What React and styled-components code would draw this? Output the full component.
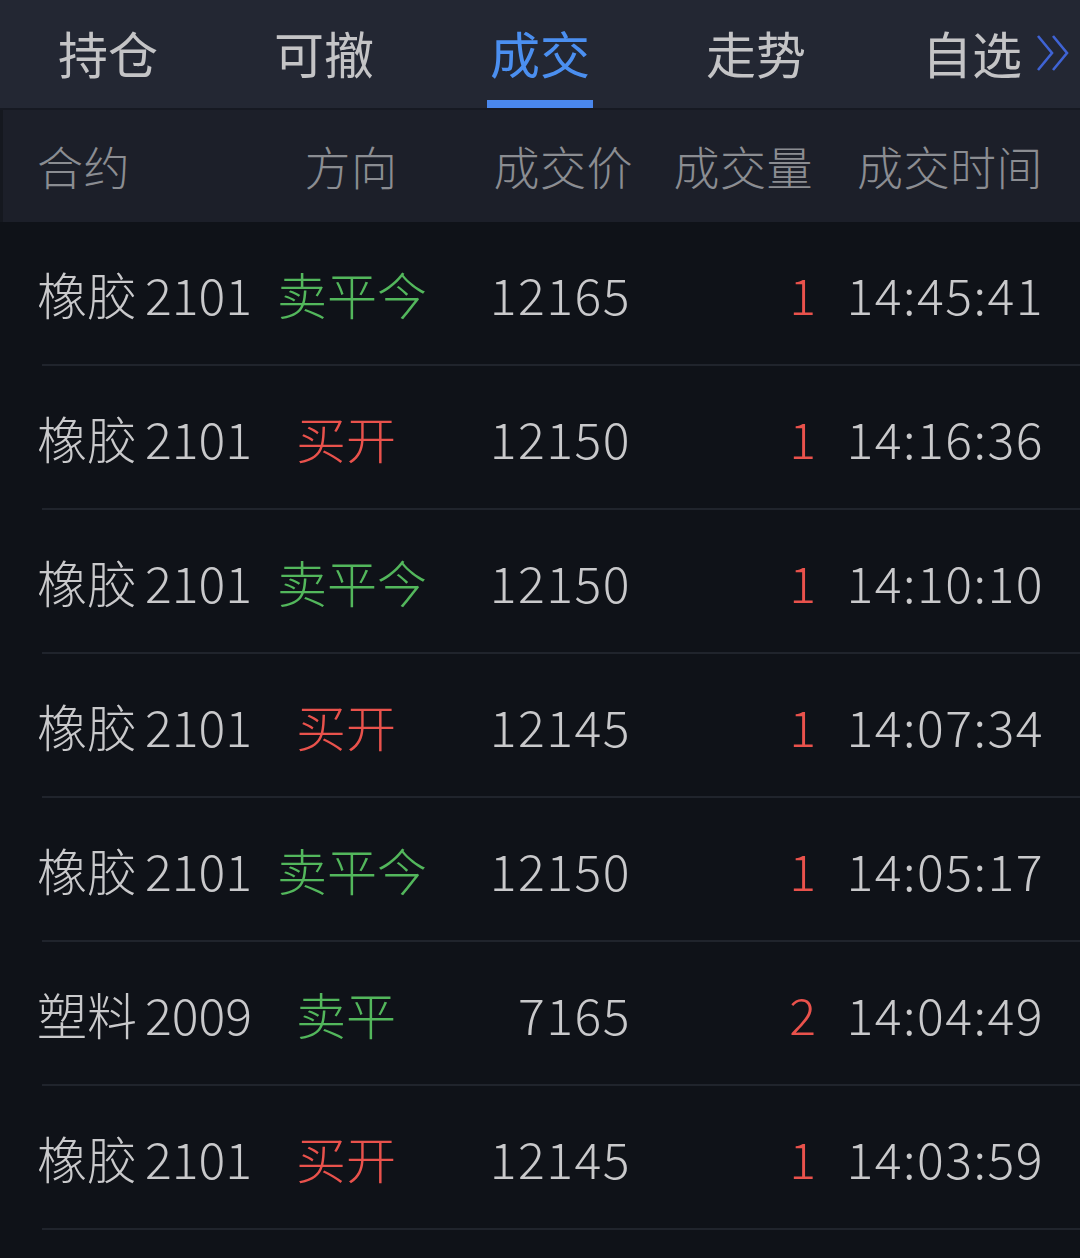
import React from "react";
import styled, { createGlobalStyle } from "styled-components";

const GlobalStyle = createGlobalStyle`
  html, body {
    margin: 0;
    padding: 0;
    background: #0f1218;
    overflow: hidden;
  }
  body {
    font-family: "Noto Sans CJK SC", "Noto Sans", sans-serif;
    font-weight: 300;
    -webkit-font-smoothing: antialiased;
  }
`;

const tabs = ["持仓", "可撤", "成交", "走势", "自选"];

const trades = [
  { name: "橡胶", code: "2101", dir: "卖平今", side: "sell", price: "12165", vol: "1", time: "14:45:41" },
  { name: "橡胶", code: "2101", dir: "买开", side: "buy", price: "12150", vol: "1", time: "14:16:36" },
  { name: "橡胶", code: "2101", dir: "卖平今", side: "sell", price: "12150", vol: "1", time: "14:10:10" },
  { name: "橡胶", code: "2101", dir: "买开", side: "buy", price: "12145", vol: "1", time: "14:07:34" },
  { name: "橡胶", code: "2101", dir: "卖平今", side: "sell", price: "12150", vol: "1", time: "14:05:17" },
  { name: "塑料", code: "2009", dir: "卖平", side: "sell", price: "7165", vol: "2", time: "14:04:49" },
  { name: "橡胶", code: "2101", dir: "买开", side: "buy", price: "12145", vol: "1", time: "14:03:59" },
];

function Chevrons() {
  return (
    <svg width="34" height="38" viewBox="0 0 34 38" fill="none">
      <path d="M2 2 L16 19 L2 36" stroke="#3f63d4" strokeWidth="2.6" />
      <path d="M17 2 L31 19 L17 36" stroke="#3f63d4" strokeWidth="2.6" />
    </svg>
  );
}

function App() {
  return (
    <Page>
      <GlobalStyle />
      <TabBar>
        {tabs.map((t, i) => (
          <Tab key={t} $active={i === 2}>
            <TabLabel $more={i === 4}>
              {t}
              {i === 4 && (
                <More>
                  <Chevrons />
                </More>
              )}
            </TabLabel>
          </Tab>
        ))}
      </TabBar>
      <HeadRow>
        <HeadCell $align="left">合约</HeadCell>
        <HeadCell $align="center">方向</HeadCell>
        <HeadCell $align="right">成交价</HeadCell>
        <HeadCell $align="right" $inset={6}>成交量</HeadCell>
        <HeadCell $align="right">成交时间</HeadCell>
      </HeadRow>
      <List>
        {trades.map((r, i) => (
          <Row key={i}>
            <Contract>
              {r.name}
              <Code>{r.code}</Code>
            </Contract>
            <Direction $side={r.side}>{r.dir}</Direction>
            <Num>{r.price}</Num>
            <Vol>{r.vol}</Vol>
            <Num>{r.time}</Num>
          </Row>
        ))}
      </List>
    </Page>
  );
}

export default App;

const Page = styled.div`
  width: 1080px;
  height: 1258px;
  background: #0f1218;
  overflow: hidden;
`;

const TabBar = styled.div`
  display: grid;
  grid-template-columns: repeat(5, 1fr);
  height: 110px;
  background: #232733;
  border-bottom: 2px solid #161922;
  box-sizing: border-box;
`;

const Tab = styled.div`
  display: flex;
  align-items: center;
  justify-content: center;
  height: 100%;
  font-size: 50px;
  font-weight: 400;
  color: ${(p) => (p.$active ? "#4b8ff0" : "#c4c4c6")};
  background-image: ${(p) =>
    p.$active ? "linear-gradient(#4a87ec, #4a87ec)" : "none"};
  background-repeat: no-repeat;
  background-size: 106px 9px;
  background-position: center 100px;
  padding-bottom: 4px;
  box-sizing: border-box;
`;

const TabLabel = styled.span`
  display: inline-flex;
  align-items: center;
  line-height: 1;
  margin-right: ${(p) => (p.$more ? "-48px" : "0")};
`;

const More = styled.span`
  display: inline-flex;
  margin-left: 14px;
  margin-top: 2px;
`;

const cols = "240px 142px 211px 186px 1fr";

const HeadRow = styled.div`
  display: grid;
  grid-template-columns: ${cols};
  align-items: center;
  height: 112px;
  padding: 0 37px;
  background: #1c1f29;
  border-left: 3px solid #15181f;
  box-sizing: border-box;
  font-size: 46px;
  color: #8b8d92;
`;

const HeadCell = styled.div`
  text-align: ${(p) => p.$align};
  line-height: 1;
  white-space: nowrap;
  padding-bottom: 2px;
  letter-spacing: 0.5px;
  margin-left: ${(p) => (p.$align === "left" ? "-3px" : "0")};
  margin-right: ${(p) => (p.$inset ? `${p.$inset}px` : "0")};
`;

const List = styled.div`
  display: flex;
  flex-direction: column;
`;

const Row = styled.div`
  display: grid;
  grid-template-columns: ${cols};
  align-items: center;
  height: 144px;
  flex-shrink: 0;
  padding: 0 37px;
  box-sizing: border-box;
  font-size: 50px;
  color: #c9c9cb;
  background-image: linear-gradient(#20242c, #20242c);
  background-repeat: no-repeat;
  background-size: calc(100% - 42px) 2px;
  background-position: 42px 100%;
  padding-bottom: 2px;
  line-height: 1;
  white-space: nowrap;
`;

const Contract = styled.div`
  display: flex;
  align-items: center;
`;

const Code = styled.span`
  margin-left: 8px;
`;

const Direction = styled.div`
  text-align: center;
  margin-right: 4px;
  color: ${(p) => (p.$side === "buy" ? "#e9524c" : "#53b75c")};
`;

const Num = styled.div`
  text-align: right;
  letter-spacing: 1.5px;
  margin-right: -1px;
`;

const Vol = styled.div`
  text-align: right;
  color: #e9524c;
`;
